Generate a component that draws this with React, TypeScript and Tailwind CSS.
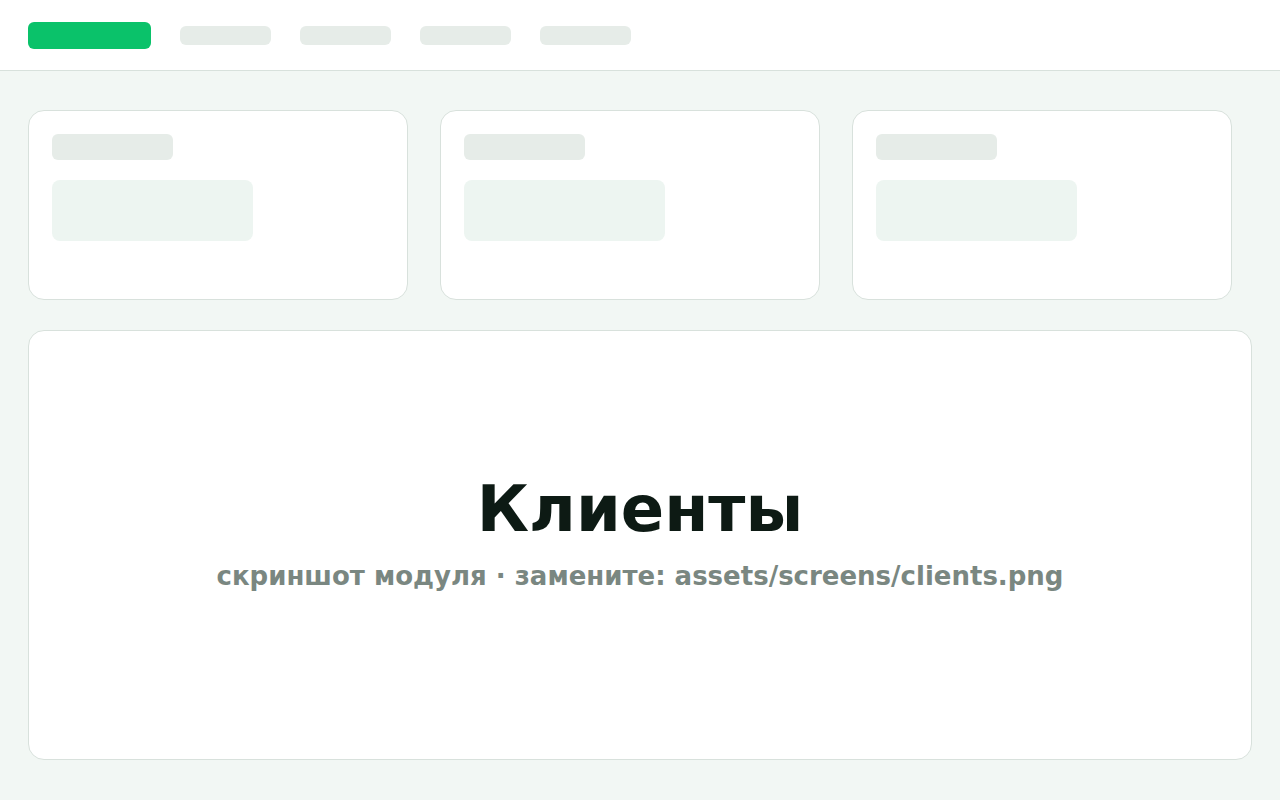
import React from 'react';

const navItems = [1, 2, 3, 4];
const cards = [1, 2, 3];

const StatCard: React.FC = () => (
  <div className="w-[380px] h-[190px] rounded-2xl border border-[#d8e1dc] bg-white p-[23px]">
    <div className="w-[121px] h-[26px] rounded-md bg-[#e6ece8]" />
    <div className="mt-5 w-[201px] h-[61px] rounded-lg bg-[#edf5f1]" />
  </div>
);

export default function App() {
  return (
    <div className="w-full h-[800px] bg-[#f2f7f4] flex flex-col" style={{ fontFamily: '"DejaVu Sans", "Noto Sans", sans-serif' }}>
      <header className="h-[71px] shrink-0 bg-white border-b border-[#d8e1dc] flex items-center px-7 pt-[1px] gap-[29px]">
        <div className="w-[123px] h-[27px] rounded-md bg-[#0ac26a]" />
        {navItems.map((n) => (
          <div key={n} className="w-[91px] h-[19px] rounded-md bg-[#e6ece8]" />
        ))}
      </header>

      <main className="flex-1 flex flex-col px-7 pt-[39px] pb-10 gap-[30px]">
        <div className="flex gap-8">
          {cards.map((c) => (
            <StatCard key={c} />
          ))}
        </div>

        <section className="flex-1 rounded-2xl border border-[#d8e1dc] bg-white flex flex-col items-center pt-[146px]">
          <h1 className="text-[64px] leading-none font-bold text-[#0d1a14]">Клиенты</h1>
          <p className="mt-[22px] text-[26px] leading-none font-bold text-[#7a8781]">
            скриншот модуля · замените: assets/screens/clients.png
          </p>
        </section>
      </main>
    </div>
  );
}
